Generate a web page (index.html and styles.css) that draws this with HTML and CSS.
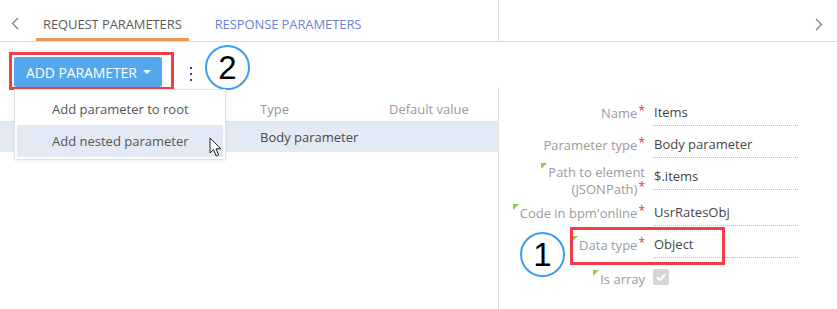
FILE: index.html
```html
<!DOCTYPE html>
<html>
<head>
<meta charset="utf-8">
<link rel="stylesheet" href="styles.css">
</head>
<body>
<div class="page">
<div class="tabs">
  <span class="nav-arrow left">
    <svg width="8" height="13" viewBox="0 0 8 13"><path d="M7 1 L1.5 6.5 L7 12" fill="none" stroke="#777" stroke-width="1.2"/></svg>
  </span>
  <div class="tab active">REQUEST PARAMETERS</div>
  <div class="tab other">RESPONSE PARAMETERS</div>
  <div class="tabs-fill"></div>
  <span class="nav-arrow right">
    <svg width="8" height="13" viewBox="0 0 8 13"><path d="M1 1 L6.5 6.5 L1 12" fill="none" stroke="#777" stroke-width="1.2"/></svg>
  </span>
</div>

<div class="toolbar">
  <div class="annot-btn">
    <button class="add-btn">ADD PARAMETER <span class="caret"></span></button>
  </div>
  <div class="kebab"><i></i><i></i><i></i></div>
  <div class="badge badge-2">2</div>
</div>

<div class="content">
  <div class="left">
    <div class="thead">
      <div class="col col-name"></div>
      <div class="col col-type">Type</div>
      <div class="col col-def">Default value</div>
    </div>
    <div class="trow selected">
      <div class="col col-name"></div>
      <div class="col col-type">Body parameter</div>
      <div class="col col-def"></div>
    </div>

    <div class="dropdown">
      <div class="dd-item">Add parameter to root</div>
      <div class="dd-item hover">Add nested parameter</div>
    </div>
    <svg class="cursor" width="14" height="21" viewBox="0 0 14 21">
      <path d="M1 1 L1 16 L4.5 12.6 L7.2 19 L9.6 18 L7 11.8 L12 11.8 Z" fill="#fff" stroke="#222" stroke-width="1" stroke-linejoin="miter"/>
    </svg>
  </div>

  <div class="right">
    <div class="frow">
      <div class="flabel"><span>Name<sup>*</sup></span></div>
      <div class="fval">Items</div>
    </div>
    <div class="frow">
      <div class="flabel"><span>Parameter type<sup>*</sup></span></div>
      <div class="fval">Body parameter</div>
    </div>
    <div class="frow">
      <div class="flabel two"><span><i class="tri"></i>Path to element</span><br><span>(JSONPath)<sup>*</sup></span></div>
      <div class="fval">$.items</div>
    </div>
    <div class="frow tall">
      <div class="flabel"><span><i class="tri"></i>Code in bpm'online<sup>*</sup></span></div>
      <div class="fval">UsrRatesObj</div>
    </div>
    <div class="frow">
      <div class="flabel"><span><i class="tri"></i>Data type<sup>*</sup></span></div>
      <div class="fval">Object</div>
    </div>
    <div class="frow check-row">
      <div class="flabel"><span><i class="tri"></i>Is array</span></div>
      <div class="fcheck">
        <span class="checkbox">
          <svg width="16" height="16" viewBox="0 0 16 16"><path d="M4 8.3 L6.8 11 L12 5.5" fill="none" stroke="#fff" stroke-width="2"/></svg>
        </span>
      </div>
    </div>

    <div class="annot-box"></div>
    <div class="badge badge-1">1</div>
  </div>
</div>
</div>
</body>
</html>
```

FILE: styles.css
```css
* { box-sizing: border-box; }
html, body {
  margin: 0;
  padding: 0;
  background: #fff;
  font-family: "Open Sans", "Liberation Sans", sans-serif;
}
.page {
  width: 837px;
  height: 309px;
  overflow: hidden;
  background: #fff;
}

.tabs {
  display: grid;
  grid-template-columns: 36px max-content max-content minmax(0, 1fr) 23px;
  height: 42px;
  border-bottom: 1px solid #d9d9d9;
  background: #fff;
  position: relative;
  z-index: 2;
}
.tabs-fill { background: #fff; }
.nav-arrow {
  display: flex;
  align-items: center;
  height: 41px;
  padding-top: 6px;
}
.nav-arrow.left { padding-left: 11px; }
.nav-arrow.right { padding-left: 1px; }
.tab {
  display: flex;
  align-items: center;
  height: 41px;
  padding: 9px 7px 0;
  font-size: 13px;
  letter-spacing: -0.1px;
  border-bottom: 3px solid transparent;
}
.tab.active {
  color: #5c5c5c;
  border-bottom-color: #e5995a;
}
.tab.other {
  color: #6f7fd3;
  margin-left: 19px;
}

.toolbar {
  display: flex;
  align-items: flex-start;
  height: 45px;
  padding-left: 9px;
  position: relative;
}
.annot-btn {
  border: 3px solid #f03d48;
  padding: 2px 9px 0 2px;
  margin-top: 10px;
  height: 38px;
}
.add-btn {
  display: flex;
  align-items: center;
  width: 148px;
  height: 30px;
  border: 0;
  border-radius: 2px;
  background: #53a8ec;
  color: #fff;
  font-family: "Open Sans", "Liberation Sans", sans-serif;
  font-size: 14px;
  padding: 0 0 0 12px;
  letter-spacing: -0.1px;
  white-space: nowrap;
}
.caret {
  display: inline-block;
  margin-left: 6px;
  border-left: 4.5px solid transparent;
  border-right: 4.5px solid transparent;
  border-top: 4.5px solid #fff;
}
.kebab {
  display: flex;
  flex-direction: column;
  gap: 4px;
  margin-left: 16px;
  margin-top: 25px;
}
.kebab i {
  display: block;
  width: 2px;
  height: 2px;
  background: #3d3d8f;
}
.badge {
  position: absolute;
  width: 45px;
  height: 45px;
  border: 2.5px solid #3d9df2;
  border-radius: 50%;
  display: flex;
  align-items: center;
  justify-content: center;
  font-family: "Liberation Sans", Arial, sans-serif;
  font-size: 33px;
  color: #000;
  background: #fff;
}
.badge-2 { left: 205px; top: 3px; }

.content {
  display: flex;
  height: 222px;
}
.left {
  width: 499px;
  border-right: 1px solid #dedede;
  position: relative;
}
.thead, .trow {
  display: flex;
  font-size: 13px;
}
.thead {
  height: 35px;
  align-items: center;
  padding-top: 9px;
  color: #9a9a9a;
  border-bottom: 1px solid #e3e3e3;
}
.trow {
  height: 30px;
  align-items: center;
  color: #4a4a4a;
}
.trow.selected { background: #e3e9f5; }
.col-name { width: 260px; }
.col-type { width: 129px; }
.col-def { flex: 1; }

.dropdown {
  position: absolute;
  left: 14px;
  top: 2px;
  width: 212px;
  height: 71px;
  background: #fff;
  border: 1px solid #e2e2e2;
  box-shadow: 0 1px 3px rgba(0,0,0,0.08);
  padding: 3px 2px 2px;
}
.dd-item {
  height: 32px;
  display: flex;
  align-items: center;
  padding-left: 35px;
  font-size: 13px;
  color: #555;
}
.dd-item.hover { background: #e3e9f5; }
.cursor {
  position: absolute;
  left: 209px;
  top: 50px;
}

.right {
  flex: 1;
  position: relative;
  padding-top: 7px;
}
.frow {
  display: flex;
  height: 32px;
  align-items: flex-start;
}
.frow.tall { height: 36px; padding-top: 4px; }
.flabel {
  width: 146px;
  text-align: right;
  font-size: 13px;
  line-height: 17px;
  color: #9b9b9b;
  padding-top: 11px;
  white-space: nowrap;
}
.flabel.two { padding-top: 6px; }
.flabel sup {
  color: #e5373d;
  font-size: 12px;
  line-height: 0;
  vertical-align: 3px;
  margin-left: 1px;
}
.tri {
  display: inline-block;
  width: 0;
  height: 0;
  border-top: 6px solid #86cf3f;
  border-right: 6px solid transparent;
  vertical-align: top;
  margin-top: -1px;
  margin-right: 1px;
}
.fval {
  margin-left: 8px;
  margin-top: 8px;
  width: 145px;
  height: 24px;
  border-bottom: 1px dotted #b8b8b8;
  font-size: 13px;
  line-height: 20px;
  padding-left: 1px;
  color: #454545;
  white-space: nowrap;
}
.check-row .flabel { padding-top: 13px; }
.fcheck {
  margin-left: 8px;
  margin-top: 11px;
}
.checkbox {
  display: block;
  width: 16px;
  height: 16px;
  background: #d6d6d6;
  border-radius: 2px;
}
.checkbox svg { display: block; }

.annot-box {
  position: absolute;
  left: 71px;
  top: 140px;
  width: 155px;
  height: 38px;
  border: 3px solid #f03d48;
}
.badge-1 { left: 21px; top: 145px; }
```
